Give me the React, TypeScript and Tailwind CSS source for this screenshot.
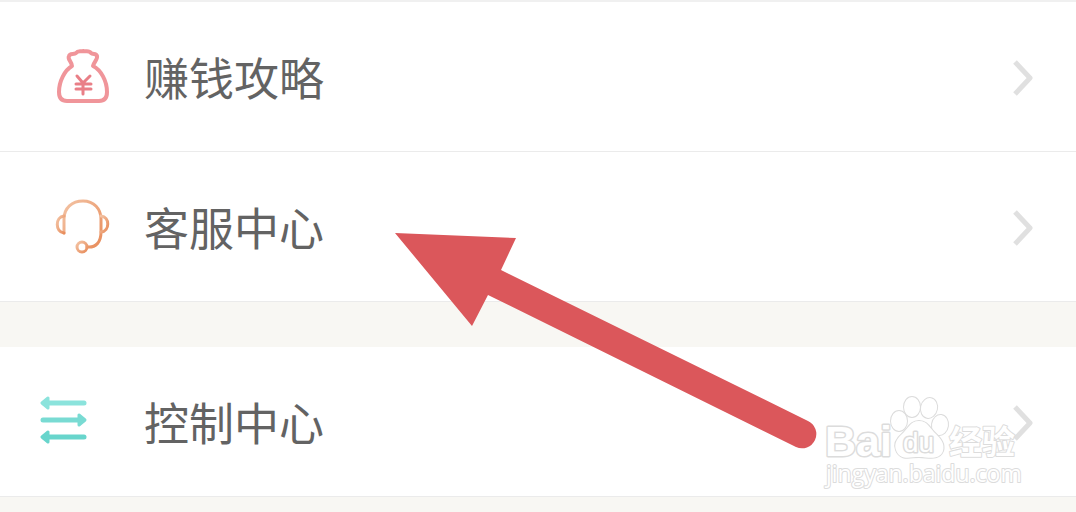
import React from "react";

const MoneyBagIcon = () => (
  <svg width="56" height="60" viewBox="0 0 56 60" fill="none" strokeLinecap="round" strokeLinejoin="round" aria-hidden="true">
    <path
      d="M17 19C17 15 12 12 14 9C15 6 19 8 21 6C23 3 26 5 28 4C31 5 34 3 36 6C38 8 41 6 42 9C43 12 39 15 38 19C46 23 52 34 52 45C52 51 49 54 44 54H12C7 54 4 51 4 45C4 34 10 23 17 19Z"
      stroke="#f0959a"
      strokeWidth="4"
    />
    <path d="M22 29L28 36L35 29M28 36V47M21 37H36M21 42H36" stroke="#e97f87" strokeWidth="3" />
  </svg>
);

const HeadsetIcon = () => (
  <svg width="56" height="60" viewBox="0 0 56 60" fill="none" strokeWidth="3" strokeLinecap="round" strokeLinejoin="round" aria-hidden="true">
    <defs>
      <linearGradient id="headset" x1="0" y1="0" x2="1" y2="1">
        <stop offset="0" stopColor="#f3c3a4" />
        <stop offset="1" stopColor="#e88d5c" />
      </linearGradient>
    </defs>
    <g stroke="url(#headset)">
      <path d="M9 36V22C9 11 17 4 28 4C39 4 46 12 46 22V35C46 45 41 51 32 50" />
      <path d="M9 19C0 20 0 35 9 36" />
      <path d="M46 19C55 20 55 34 46 35" />
      <circle cx="27" cy="50" r="5" />
    </g>
  </svg>
);

const ControlIcon = () => (
  <svg width="48" height="48" viewBox="0 0 48 48" fill="none" strokeWidth="5" strokeLinecap="round" strokeLinejoin="round" aria-hidden="true">
    <g stroke="#8be3dc" fill="#8be3dc">
      <path d="M4 7H44" />
      <path d="M2 7L8 2V12Z" strokeWidth="3" />
    </g>
    <g stroke="#79dbd3" fill="#79dbd3">
      <path d="M3 24H43" />
      <path d="M45 24L39 19V29Z" strokeWidth="3" />
    </g>
    <g stroke="#68d5cc" fill="#68d5cc">
      <path d="M4 41H44" />
      <path d="M2 41L8 36V46Z" strokeWidth="3" />
    </g>
  </svg>
);

const ChevronIcon = () => (
  <svg width="24" height="40" viewBox="0 0 24 40" fill="none" stroke="#e0e0e0" strokeWidth="5" strokeLinejoin="round" aria-hidden="true">
    <path d="M3 3L18 19L3 35" />
  </svg>
);

type MenuRowProps = {
  icon: React.ReactNode;
  label: string;
  wideIcon?: boolean;
};

const MenuRow = ({ icon, label, wideIcon }: MenuRowProps) => (
  <a href="#" className="flex h-[150px] items-center border-b border-[#ebebeb] bg-white pt-1 pr-10 pl-10">
    <span className={wideIcon ? "w-[104px] shrink-0 pb-2" : "w-[104px] shrink-0 pb-1 pl-[15px]"}>{icon}</span>
    <span className="flex-1 pb-1 text-[45px] leading-none text-[#636363]">{label}</span>
    <ChevronIcon />
  </a>
);

const PointerArrow = () => (
  <svg className="pointer-events-none absolute top-[228px] left-[390px]" width="430" height="224" viewBox="390 228 430 224" aria-hidden="true">
    <path d="M395 233L516 238L501 270L808 421A14 14 0 0 1 796 447L488 295L472 326Z" fill="#db575b" />
  </svg>
);

const Watermark = () => (
  <svg
    className="pointer-events-none absolute right-12 bottom-4"
    width="208"
    height="100"
    viewBox="820 396 208 100"
    fill="#ffffff"
    stroke="#dcdcdc"
    strokeWidth="2"
    strokeLinejoin="round"
    paintOrder="stroke"
    fontFamily="'Liberation Sans', 'Noto Sans CJK SC', sans-serif"
  >
    <text x="825" y="456" fontSize="43" fontWeight="700" strokeWidth="3">Bai</text>
    <ellipse cx="899" cy="421" rx="8" ry="10" />
    <ellipse cx="912" cy="407" rx="8" ry="10" />
    <ellipse cx="929" cy="408" rx="8" ry="10" transform="rotate(12 929 408)" />
    <ellipse cx="940" cy="425" rx="8" ry="10" transform="rotate(8 940 425)" />
    <path
      d="M919 421C910 421 908 429 902 434C896 439 894 445 896 450C900 461 910 457 919 457C928 457 939 461 943 451C945 444 941 439 936 434C930 429 928 421 919 421Z"
    />
    <text x="903" y="452" fontSize="28" strokeWidth="3">du</text>
    <text x="949" y="454" fontSize="33" fontWeight="700" fontFamily="'Noto Sans CJK SC', sans-serif">经验</text>
    <text x="826" y="482" fontSize="23" fontFamily="'Open Sans', sans-serif">jingyan.baidu.com</text>
  </svg>
);

const App = () => {
  return (
    <main className="relative min-h-screen bg-[#f8f7f3] font-['Noto_Sans_CJK_SC',sans-serif]">
      <nav>
        <div className="border-t-2 border-[#f0f0f0]">
          <MenuRow icon={<MoneyBagIcon />} label="赚钱攻略" />
          <MenuRow icon={<HeadsetIcon />} label="客服中心" />
        </div>
        <div className="mt-[45px]">
          <MenuRow icon={<ControlIcon />} label="控制中心" wideIcon />
        </div>
      </nav>
      <PointerArrow />
      <Watermark />
    </main>
  );
};

export default App;
